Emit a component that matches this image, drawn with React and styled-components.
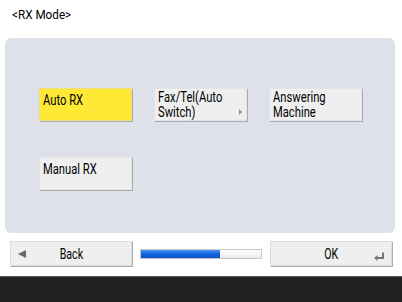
import React from "react";
import styled, { createGlobalStyle } from "styled-components";

const Global = createGlobalStyle`
  html, body { margin: 0; padding: 0; background: #fff; }
  body { font-family: Roboto, "Liberation Sans", sans-serif; }
`;

const Screen = styled.div`
  width: 402px;
  height: 302px;
  display: flex;
  flex-direction: column;
  background: #fff;
  overflow: hidden;
`;

const Title = styled.div`
  height: 38px;
  box-sizing: border-box;
  padding: 4px 0 0 12px;
  color: #000;
`;

const Panel = styled.div`
  margin: 0 7px 0 5px;
  height: 196px;
  box-sizing: border-box;
  background: #dee1ea;
  border-radius: 6px;
  padding: 50px 0 0 34px;
  display: grid;
  grid-template-columns: repeat(3, 93px);
  grid-auto-rows: 33px;
  column-gap: 22px;
  row-gap: 36px;
  align-content: start;
`;

const ModeButton = styled.div`
  position: relative;
  box-sizing: border-box;
  background: ${(p) => (p.$active ? "#ffe934" : "#efefef")};
  border: 1px solid ${(p) => (p.$active ? "#efe080" : "#e4e4e4")};
  box-shadow: 1px 1px 0 #a9abb0;
  padding: 1px 3px;
  color: #000;
`;

const Label = styled.span`
  display: inline-block;
  font-size: ${(p) => p.$size || 14}px;
  line-height: ${(p) => p.$lh || 15}px;
  transform: scaleX(${(p) => p.$scale || 0.8});
  transform-origin: ${(p) => p.$origin || "left top"};
  white-space: nowrap;
`;

const SubArrow = styled.span`
  position: absolute;
  right: 4px;
  bottom: 5px;
  width: 0;
  height: 0;
  border-top: 3px solid transparent;
  border-bottom: 3px solid transparent;
  border-left: 3px solid #8a8a8a;
`;

const Footer = styled.div`
  margin: 8px 0 0 10px;
  display: flex;
  align-items: center;
  gap: 8px;
  height: 25px;
`;

const FooterButton = styled.div`
  position: relative;
  width: 122px;
  height: 25px;
  box-sizing: border-box;
  background: #efefef;
  border: 1px solid #dcdcdc;
  box-shadow: 1px 1px 0 #a9abb0;
  display: flex;
  align-items: center;
  justify-content: center;
  color: #000;
`;

const BackArrow = styled.span`
  position: absolute;
  left: 7px;
  top: 8px;
  width: 0;
  height: 0;
  border-top: 4px solid transparent;
  border-bottom: 4px solid transparent;
  border-right: 8px solid #666;
`;

const EnterIcon = styled.svg`
  position: absolute;
  right: 6px;
  bottom: 4px;
`;

const Progress = styled.div`
  width: 122px;
  height: 10px;
  box-sizing: border-box;
  border: 1px solid #c8c8c8;
  background: linear-gradient(#ffffff, #ececec);
  display: flex;
`;

const ProgressFill = styled.div`
  height: 100%;
  background: linear-gradient(#4d9af3 0%, #1466e0 45%, #0a52c8 100%);
`;

const BottomBar = styled.div`
  margin-top: 10px;
  height: 25px;
  background: #222222;
  border-top: 1px solid #555;
`;

export default function App() {
  return (
    <>
      <Global />
      <Screen>
        <Title>
          <Label $size={13} $lh={16} $scale={0.9}>
            &lt;RX Mode&gt;
          </Label>
        </Title>
        <Panel>
          <ModeButton $active>
            <Label>Auto RX</Label>
          </ModeButton>
          <ModeButton>
            <Label>
              Fax/Tel(Auto
              <br />
              Switch)
            </Label>
            <SubArrow />
          </ModeButton>
          <ModeButton>
            <Label>
              Answering
              <br />
              Machine
            </Label>
          </ModeButton>
          <ModeButton>
            <Label>Manual RX</Label>
          </ModeButton>
        </Panel>
        <Footer>
          <FooterButton>
            <BackArrow />
            <Label $size={14} $lh={16} $scale={0.76} $origin="center">
              Back
            </Label>
          </FooterButton>
          <Progress>
            <ProgressFill style={{ width: "66%" }} />
          </Progress>
          <FooterButton>
            <Label $size={14} $lh={16} $scale={0.76} $origin="center">
              OK
            </Label>
            <EnterIcon width="12" height="9" viewBox="0 0 12 9">
              <path d="M10 0.5 V6 H4" fill="none" stroke="#777" strokeWidth="2" />
              <path d="M1 6 L4.5 3 V9 Z" fill="#777" />
            </EnterIcon>
          </FooterButton>
        </Footer>
        <BottomBar />
      </Screen>
    </>
  );
}
